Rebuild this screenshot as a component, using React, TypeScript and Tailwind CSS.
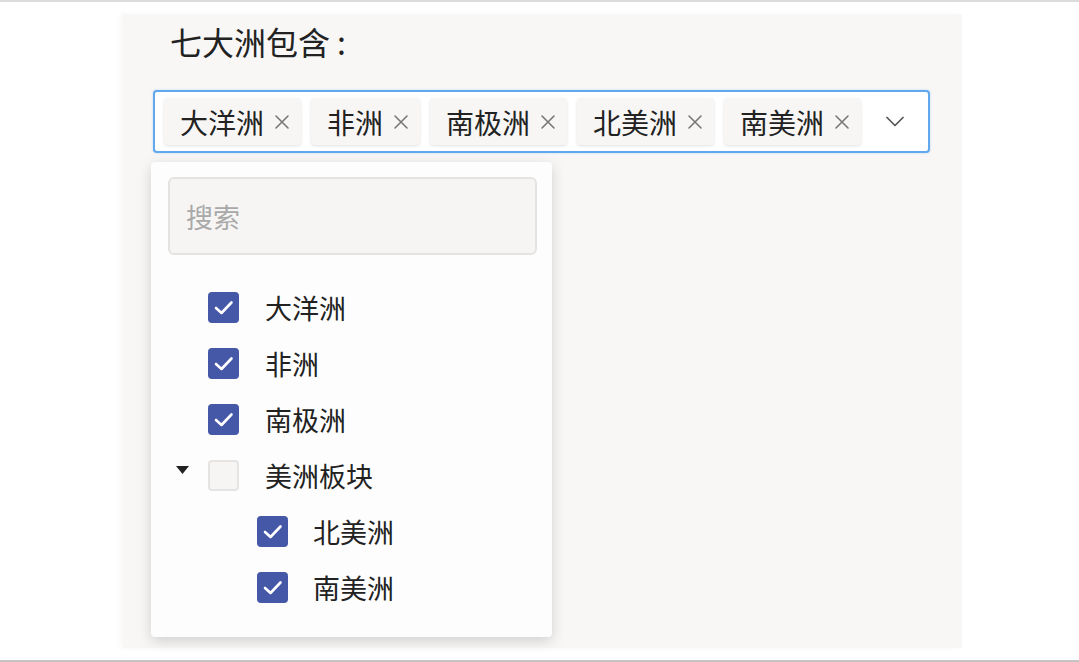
import React from "react";

const font = { fontFamily: '"Noto Sans CJK SC", "Noto Sans", sans-serif' };

function Tag({ label }: { label: string }) {
  return (
    <div className="flex h-[47px] shrink-0 items-center rounded-[4px] bg-[#f7f6f5] pl-[16px] pr-[11px] shadow-[0_1px_3px_rgba(0,0,0,0.12)]">
      <span className="text-[28px] leading-none text-[#222]">{label}</span>
      <svg className="ml-[10px] h-[16px] w-[16px] shrink-0" viewBox="0 0 16 16" fill="none">
        <path d="M2 2 L14 14 M14 2 L2 14" stroke="#777" strokeWidth="1.6" strokeLinecap="round" />
      </svg>
    </div>
  );
}

function Check({ checked }: { checked: boolean }) {
  if (!checked)
    return <div className="h-[31px] w-[31px] shrink-0 rounded-[4px] border-2 border-[#e6e4e2] bg-[#f6f5f4]" />;
  return (
    <div className="h-[31px] w-[31px] shrink-0 rounded-[4px] bg-[#4557a7]">
      <svg className="block h-[31px] w-[31px]" viewBox="0 0 31 31" fill="none">
        <path d="M8 16 L13.5 21 L23.5 10.5" stroke="white" strokeWidth="2.6" strokeLinecap="round" strokeLinejoin="round" />
      </svg>
    </div>
  );
}

function Row({ label, checked, indent, caret }: { label: string; checked: boolean; indent?: boolean; caret?: boolean }) {
  return (
    <div className={`relative flex h-[56px] items-center ${indent ? "pl-[106px]" : "pl-[57px]"}`}>
      {caret && (
        <svg className="absolute left-[25px] top-[19px]" width="13" height="8" viewBox="0 0 13 8">
          <path d="M0 0 H13 L6.5 8 Z" fill="#222" />
        </svg>
      )}
      <Check checked={checked} />
      <span className={`${indent ? "ml-[25px]" : "ml-[26px]"} text-[27px] leading-none text-[#222]`}>{label}</span>
    </div>
  );
}

export default function App() {
  return (
    <div className="relative h-[662px] w-[1079px] overflow-hidden bg-white" style={font}>
      <div className="h-[2px] w-full bg-[#dcdcdc]" />
      <div className="ml-[123px] mt-[12px] h-[634px] w-[839px] bg-[#f8f7f6] shadow-[-3px_0_6px_rgba(0,0,0,0.03)]">
        <div className="relative pl-[30px] pt-[9px]">
          <div className="flex items-baseline pl-[17px] text-[32px] leading-[36px] text-[#222]">
            <span>七大洲包含</span>
            <span className="ml-[7px]">:</span>
          </div>
          <div className="mt-[31px] flex h-[63px] w-[777px] items-center gap-[10px] rounded-[4px] border-2 border-[#62a8ee] bg-white pl-[9px] shadow-[0_0_2px_rgba(98,168,238,0.5)]">
            <Tag label="大洋洲" />
            <Tag label="非洲" />
            <Tag label="南极洲" />
            <Tag label="北美洲" />
            <Tag label="南美洲" />
            <svg className="ml-[15px] shrink-0" width="18" height="11" viewBox="0 0 18 11" fill="none">
              <path d="M1 1.5 L9 9.5 L17 1.5" stroke="#555" strokeWidth="1.7" strokeLinecap="round" strokeLinejoin="round" />
            </svg>
          </div>
          <div className="absolute left-[28px] top-[148px] w-[401px] rounded-[4px] bg-[#fdfdfd] pb-[22px] pl-[17px] pr-[15px] pt-[15px] shadow-[0_4px_14px_rgba(0,0,0,0.16)]">
            <div className="flex h-[78px] items-center rounded-[6px] border-2 border-[#e5e3e1] bg-[#f6f5f4] pl-[16px]">
              <span className="text-[27px] leading-none text-[#a9a9a9]">搜索</span>
            </div>
            <div className="-ml-[17px] mt-[24px]">
              <Row label="大洋洲" checked />
              <Row label="非洲" checked />
              <Row label="南极洲" checked />
              <Row label="美洲板块" checked={false} caret />
              <Row label="北美洲" checked indent />
              <Row label="南美洲" checked indent />
            </div>
          </div>
        </div>
      </div>
      <div className="absolute bottom-0 left-0 h-[2px] w-full bg-[#c4c4c4]" />
    </div>
  );
}
